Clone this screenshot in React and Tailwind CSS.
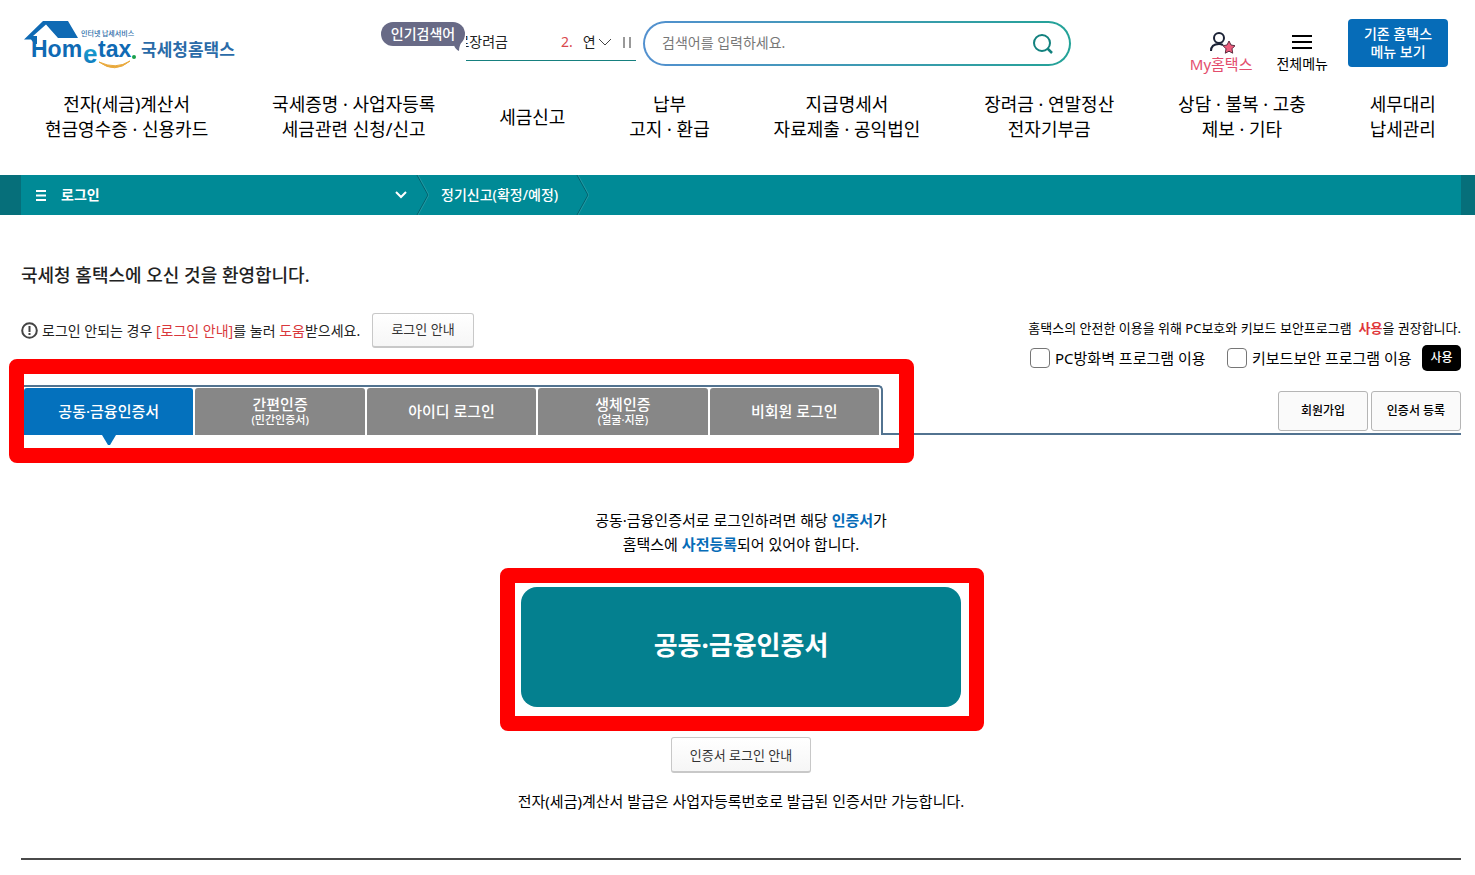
import { useState } from 'react'

const MENU = [
  ['전자(세금)계산서', '현금영수증 · 신용카드'],
  ['국세증명 · 사업자등록', '세금관련 신청/신고'],
  ['세금신고'],
  ['납부', '고지 · 환급'],
  ['지급명세서', '자료제출 · 공익법인'],
  ['장려금 · 연말정산', '전자기부금'],
  ['상담 · 불복 · 고충', '제보 · 기타'],
  ['세무대리', '납세관리']
]

const TABS = [
  { id: 'cert', label: '공동·금융인증서' },
  { id: 'simple', label: '간편인증', sub: '(민간인증서)' },
  { id: 'id', label: '아이디 로그인' },
  { id: 'bio', label: '생체인증', sub: '(얼굴·지문)' },
  { id: 'guest', label: '비회원 로그인' }
]

function Logo() {
  return (
    <svg width="212" height="52" viewBox="0 0 212 52" role="img" aria-label="Hometax 국세청홈택스">
      <defs>
        <linearGradient id="logo-e" x1="0" y1="0" x2="0" y2="1">
          <stop offset="0" stopColor="#22b8dc" />
          <stop offset="1" stopColor="#0a6fb8" />
        </linearGradient>
      </defs>
      <path d="M19 1H44L54 18H34L22 4.500L9 16V22L7 19.500H0Z" fill="#0f6ab4" />
      <path d="M9 16H13V24H9Z" fill="#0f6ab4" />
      <text x="57" y="16" fontSize="7" fontWeight="500" fill="#2a6ba8" fontFamily="'Noto Sans CJK KR', sans-serif">인터넷 납세서비스</text>
      <text x="7" y="37" fontSize="23" fontWeight="700" fill="#0f6ab4" fontFamily="'Liberation Sans', sans-serif">Hom</text>
      <text x="59" y="43" fontSize="26" fontWeight="700" fill="url(#logo-e)" fontFamily="'Liberation Sans', sans-serif">e</text>
      <text x="74" y="37" fontSize="23" fontWeight="700" fill="#0f6ab4" fontFamily="'Liberation Sans', sans-serif">tax</text>
      <circle cx="110" cy="37" r="2" fill="#18a04a" />
      <path d="M75 42Q91 54 106 41Q92 50 75 42Z" fill="#e9a93c" stroke="#e9a93c" strokeWidth="1" />
      <text x="117" y="36" fontSize="17" fontWeight="700" fill="#2a6ba8" fontFamily="'Noto Sans CJK KR', sans-serif">국세청홈택스</text>
    </svg>
  )
}

function Separator() {
  return (
    <svg width="13" height="40" viewBox="0 0 13 40" fill="none" aria-hidden="true">
      <path d="M1 0L12 20L1 40" stroke="#04606b" />
      <path d="M2 0L13 20L2 40" stroke="#3aa5ae" strokeOpacity=".6" />
    </svg>
  )
}

function Header() {
  return (
    <header>
      <div className="flex h-[92px] items-start pl-6 pr-[27px] pt-5">
        <a href="#home" className="shrink-0"><Logo /></a>

        <div className="ml-[145px] flex shrink-0">
          <div className="relative mt-[2px] flex h-6 w-[84px] items-center justify-center rounded-full bg-[#686a86] text-sm font-medium text-white">
            인기검색어
            <svg className="absolute right-[2px] top-[18px]" width="12" height="11" viewBox="0 0 12 11" aria-hidden="true">
              <path d="M0 5L12 0Q8 5 8 11Q4 9 3 5Z" fill="#686a86" />
            </svg>
          </div>
          <div className="ml-px flex h-[41px] w-[170px] items-center border-b border-[#16807f] pt-1 text-sm text-[#222]">
            <div className="flex w-[42px] justify-end overflow-hidden whitespace-nowrap">로장려금</div>
            <span className="ml-[53px] text-[#d9474c]">2.</span>
            <span className="ml-[10px]">연</span>
            <button type="button" aria-label="인기검색어 펼치기" className="ml-[2px]">
              <svg width="14" height="8" viewBox="0 0 14 8" fill="none" stroke="#444"><path d="M1 1L7 7L13 1" /></svg>
            </button>
            <button type="button" aria-label="정지" className="ml-auto mr-[5px] flex h-[11px] w-[8px] justify-between border-x-2 border-[#999]" />
          </div>
        </div>

        <form className="ml-[7px] mt-px w-[428px] rounded-full bg-gradient-to-r from-[#5290cf] to-[#22a297] p-[2px]" onSubmit={e => e.preventDefault()}>
          <div className="flex h-[41px] items-center rounded-full bg-white pl-[17px] pr-[15px]">
            <input type="text" aria-label="검색어" placeholder="검색어를 입력하세요." className="min-w-0 flex-1 pb-[2px] text-sm outline-none placeholder:text-[#777]" />
            <button type="submit" aria-label="검색">
              <svg width="22" height="22" viewBox="0 0 22 22" fill="none" stroke="#12817e" strokeWidth="2"><circle cx="10" cy="10" r="8" /><path d="M15.500 15.500L20 20" strokeWidth="2.500" /></svg>
            </button>
          </div>
        </form>

        <div className="ml-auto flex shrink-0">
          <a href="#my" className="mt-3 flex flex-col items-center text-[15px] leading-[20px] text-[#e34d6d]">
            <svg width="28" height="22" viewBox="0 0 28 22" fill="none" aria-hidden="true">
              <circle cx="12" cy="6" r="5" stroke="#1b2235" strokeWidth="2" />
              <path d="M4 19Q4 12 12 12Q14 12 16 13" stroke="#1b2235" strokeWidth="2" />
              <path d="M22 9L24 13L28 13.700L25 16.800L25.700 21.200L22 19.200L18.300 21.200L19 16.800L16 13.700L20 13Z" fill="#ee5b7b" stroke="#5b2c40" strokeLinejoin="round" />
            </svg>
            <span>My홈택스</span>
          </a>
          <button type="button" className="ml-6 mt-3 flex flex-col items-center text-sm leading-[20px] text-black">
            <svg width="20" height="22" viewBox="0 0 20 22" stroke="#000" strokeWidth="2" aria-hidden="true"><path d="M0 4H20M0 10H20M0 16H20" /></svg>
            <span>전체메뉴</span>
          </button>
          <button type="button" className="-mt-px ml-5 h-12 w-[100px] rounded bg-[#066cb8] text-sm leading-[18px] font-medium text-white">
            기존 홈택스<br />메뉴 보기
          </button>
        </div>
      </div>

      <nav className="flex h-[83px] items-start justify-between pl-[45px] pr-[39px]">
        {MENU.map(lines => (
          <a key={lines[0]} href="#menu" className="flex h-[50px] flex-col items-center justify-center text-lg leading-[25px] whitespace-nowrap text-black">
            {lines.map(line => <span key={line}>{line}</span>)}
          </a>
        ))}
      </nav>
    </header>
  )
}

function Breadcrumb() {
  return (
    <div className="bg-[#066f7a] pl-[21px] pr-[14px]">
      <div className="flex h-10 items-center bg-[#008a96] text-sm text-white">
        <button type="button" className="flex w-[395px] items-center pl-[15px] pr-[9px]">
          <svg width="10" height="11" viewBox="0 0 10 11" stroke="#fff" strokeWidth="2" aria-hidden="true"><path d="M0 1H10M0 5.500H10M0 10H10" /></svg>
          <span className="ml-[15px] font-bold">로그인</span>
          <svg className="ml-auto" width="12" height="8" viewBox="0 0 12 8" fill="none" stroke="#fff" strokeWidth="2" aria-hidden="true"><path d="M1 1L6 6L11 1" /></svg>
        </button>
        <Separator />
        <a href="#report" className="ml-3 mr-[18px] font-medium">정기신고(확정/예정)</a>
        <Separator />
      </div>
    </div>
  )
}

export default function App() {
  const [tab, setTab] = useState('cert')

  return (
    <div className="bg-white font-['Noto_Sans','Noto_Sans_CJK_KR',sans-serif] text-black">
      <Header />
      <Breadcrumb />

      <main className="pl-[21px] pr-[14px]">
        <h1 className="pt-[46px] text-[18px] leading-[28px] font-medium text-[#222]">국세청 홈택스에 오신 것을 환영합니다.</h1>

        <div className="mt-6 flex h-[72px] items-start justify-between">
          <div className="flex items-center">
            <svg width="17" height="17" viewBox="0 0 17 17" fill="none" stroke="#444" strokeWidth="2" aria-hidden="true"><circle cx="8.500" cy="8.500" r="7.300" /><path d="M8.500 4V10M8.500 11V13" /></svg>
            <p className="ml-1 w-[330px] text-[14px] text-[#222]">
              로그인 안되는 경우 <span className="text-[#d9383c]">[로그인 안내]</span>를 눌러 <span className="text-[#d9383c]">도움</span>받으세요.
            </p>
            <button type="button" className="h-[35px] w-[102px] rounded-[3px] border border-b-2 border-[#c8c8c8] bg-gradient-to-b from-white to-[#f6f6f6] text-[13px] text-[#333]">로그인 안내</button>
          </div>

          <div className="flex flex-col items-end pt-[5px]">
            <p className="text-[13px] leading-[20px]">
              홈택스의 안전한 이용을 위해 PC보호와 키보드 보안프로그램 &nbsp;<b className="font-bold text-[#e0363b]">사용</b>을 권장합니다.
            </p>
            <div className="mt-[7px] flex items-center text-[15px]">
              <label className="flex items-center gap-[5px]">
                <input type="checkbox" className="size-5 appearance-none rounded-[4px] border border-[#767676] bg-white checked:bg-[#066cb8]" />
                <span className="w-[155px]">PC방화벽 프로그램 이용</span>
              </label>
              <label className="ml-[17px] flex items-center gap-[5px]">
                <input type="checkbox" className="size-5 appearance-none rounded-[4px] border border-[#767676] bg-white checked:bg-[#066cb8]" />
                <span className="w-[162px]">키보드보안 프로그램 이용</span>
              </label>
              <button type="button" className="ml-2 h-[26px] w-[39px] rounded-[5px] bg-black text-[12px] font-medium text-white">사용</button>
            </div>
          </div>
        </div>

        <div className="flex h-[50px]">
          <div className="relative w-[862px]">
            <div role="tablist" className="flex h-full gap-[2px] rounded-tr-[5px] border-t-2 border-r-2 border-[#527390] pl-[3px] pr-[2px] pt-px">
              {TABS.map(t => (
                <button
                  key={t.id}
                  type="button"
                  role="tab"
                  aria-selected={tab === t.id}
                  onClick={() => setTab(t.id)}
                  className={`relative flex flex-1 flex-col items-center justify-center rounded-t-[3px] pb-[2px] text-[15px] leading-[18px] font-medium text-white ${
                    tab === t.id ? 'bg-[#0471bd]' : 'bg-[#878787]'
                  }`}
                >
                  {t.label}
                  {t.sub && <span className="text-[11px] leading-[14px]">{t.sub}</span>}
                  {tab === t.id && (
                    <svg className="absolute top-full left-1/2 -translate-x-1/2" width="14" height="10" viewBox="0 0 14 10" aria-hidden="true">
                      <path d="M0 0H14L8 10H6Z" fill="#0471bd" />
                    </svg>
                  )}
                </button>
              ))}
            </div>
            <div className="pointer-events-none absolute -top-[26px] -right-[31px] -bottom-[28px] -left-[12px] rounded-lg border-[15px] border-[#ff0000]" />
          </div>
          <div className="flex flex-1 items-start justify-end gap-[3px] border-b-2 border-[#527390] pt-[6px]">
            <button type="button" className="h-10 w-[90px] rounded-[3px] border border-[#b5b5b5] bg-[#fafafa] text-[12px] font-medium">회원가입</button>
            <button type="button" className="h-10 w-[90px] rounded-[3px] border border-[#b5b5b5] bg-[#fafafa] text-[12px] font-medium">인증서 등록</button>
          </div>
        </div>

        <section className="flex flex-col items-center pt-[73px] text-[15px] leading-[24px]">
          <p className="text-center">
            공동·금융인증서로 로그인하려면 해당 <b className="font-bold text-[#066cb8]">인증서</b>가<br />
            홈택스에 <b className="font-bold text-[#066cb8]">사전등록</b>되어 있어야 합니다.
          </p>
          <div className="relative mt-[31px]">
            <button type="button" className="block h-[120px] w-[440px] rounded-2xl bg-[#04808f] pb-1 text-[26px] font-bold text-white">공동·금융인증서</button>
            <div className="pointer-events-none absolute -top-[19px] -right-[23px] -bottom-[24px] -left-[21px] rounded-lg border-[15px] border-[#ff0000]" />
          </div>
          <button type="button" className="mt-[30px] h-9 w-[140px] rounded-[3px] border border-b-2 border-[#c8c8c8] bg-gradient-to-b from-white to-[#f6f6f6] text-[13px] text-[#333]">인증서 로그인 안내</button>
          <p className="mt-4">전자(세금)계산서 발급은 사업자등록번호로 발급된 인증서만 가능합니다.</p>
        </section>

        <hr className="mt-[45px] border-t-2 border-[#4a4a4a]" />
      </main>
    </div>
  )
}
